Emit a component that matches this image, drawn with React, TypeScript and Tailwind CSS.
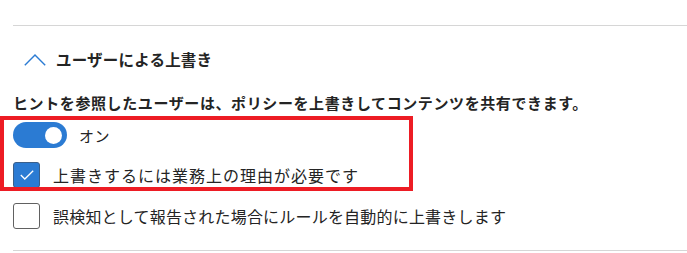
import React, { useState } from 'react';

const font = { fontFamily: '"Noto Sans CJK JP", "Noto Sans", sans-serif' };

const Chevron = () => (
  <svg width="22" height="12" viewBox="0 0 22 12" className="shrink-0">
    <polyline points="0.8,11.3 11,1 21.2,11.3" fill="none" stroke="#2b7bd3" strokeWidth="1.4" />
  </svg>
);

const Toggle: React.FC<{ on: boolean; onClick: () => void }> = ({ on, onClick }) => (
  <button
    onClick={onClick}
    className={`w-[54px] h-[26px] rounded-full flex items-center px-[5px] shrink-0 ${
      on ? 'bg-[#2b7bd3] justify-end' : 'bg-white border border-[#616161] justify-start'
    }`}
  >
    <span className={`w-[17px] h-[17px] rounded-full ${on ? 'bg-white' : 'bg-[#616161]'}`} />
  </button>
);

const Checkbox: React.FC<{ checked: boolean; onClick: () => void }> = ({ checked, onClick }) => (
  <button
    onClick={onClick}
    className={`w-[27px] h-[26px] rounded-[3px] flex items-center justify-center shrink-0 border ${
      checked ? 'bg-[#2b7bd3] border-[#3a5f8a]' : 'bg-white border-[#616161]'
    }`}
  >
    {checked && (
      <svg width="14" height="10" viewBox="0 0 14 10">
        <polyline points="0.8,5 4.8,9 13.2,0.8" fill="none" stroke="white" strokeWidth="1.3" />
      </svg>
    )}
  </button>
);

export default function App() {
  const [on, setOn] = useState(true);
  const [requireReason, setRequireReason] = useState(true);
  const [autoOverride, setAutoOverride] = useState(false);

  return (
    <div className="relative w-[687px] h-[253px] bg-white overflow-hidden text-[#242424]" style={font}>
      <div className="pt-[25px] pl-[13px]">
        <div className="border-t border-[#d6d6d6]" />

        <div className="mt-[19px] h-[30px] flex items-center pl-[11px] gap-[10px]">
          <Chevron />
          <span className="text-[15.5px] font-semibold leading-none tracking-[0.2px]">ユーザーによる上書き</span>
        </div>

        <p className="mt-[18px] h-[20px] text-[15px] font-semibold leading-[20px] tracking-[0.6px] whitespace-nowrap">
          ヒントを参照したユーザーは、ポリシーを上書きしてコンテンツを共有できます。
        </p>

        <div className="mt-[9px] h-[26px] flex items-center gap-[12px]">
          <Toggle on={on} onClick={() => setOn(!on)} />
          <span className="text-[15px] leading-none tracking-[0.5px]">{on ? 'オン' : 'オフ'}</span>
        </div>

        <div className="mt-[14px] h-[26px] flex items-center gap-[13px]">
          <Checkbox checked={requireReason} onClick={() => setRequireReason(!requireReason)} />
          <span className="text-[16px] leading-none tracking-[1px] whitespace-nowrap">
            上書きするには業務上の理由が必要です
          </span>
        </div>

        <div className="mt-[15px] h-[26px] flex items-center gap-[13px]">
          <Checkbox checked={autoOverride} onClick={() => setAutoOverride(!autoOverride)} />
          <span className="text-[16px] leading-none tracking-[0.2px] whitespace-nowrap">
            誤検知として報告された場合にルールを自動的に上書きします
          </span>
        </div>

        <div className="mt-[21px] border-t border-[#d6d6d6]" />
      </div>

      {/* annotation box over the toggle and first checkbox */}
      <div className="absolute left-0 top-[116px] w-[413px] h-[75px] border-4 border-[#ed1c24] pointer-events-none" />
    </div>
  );
}
